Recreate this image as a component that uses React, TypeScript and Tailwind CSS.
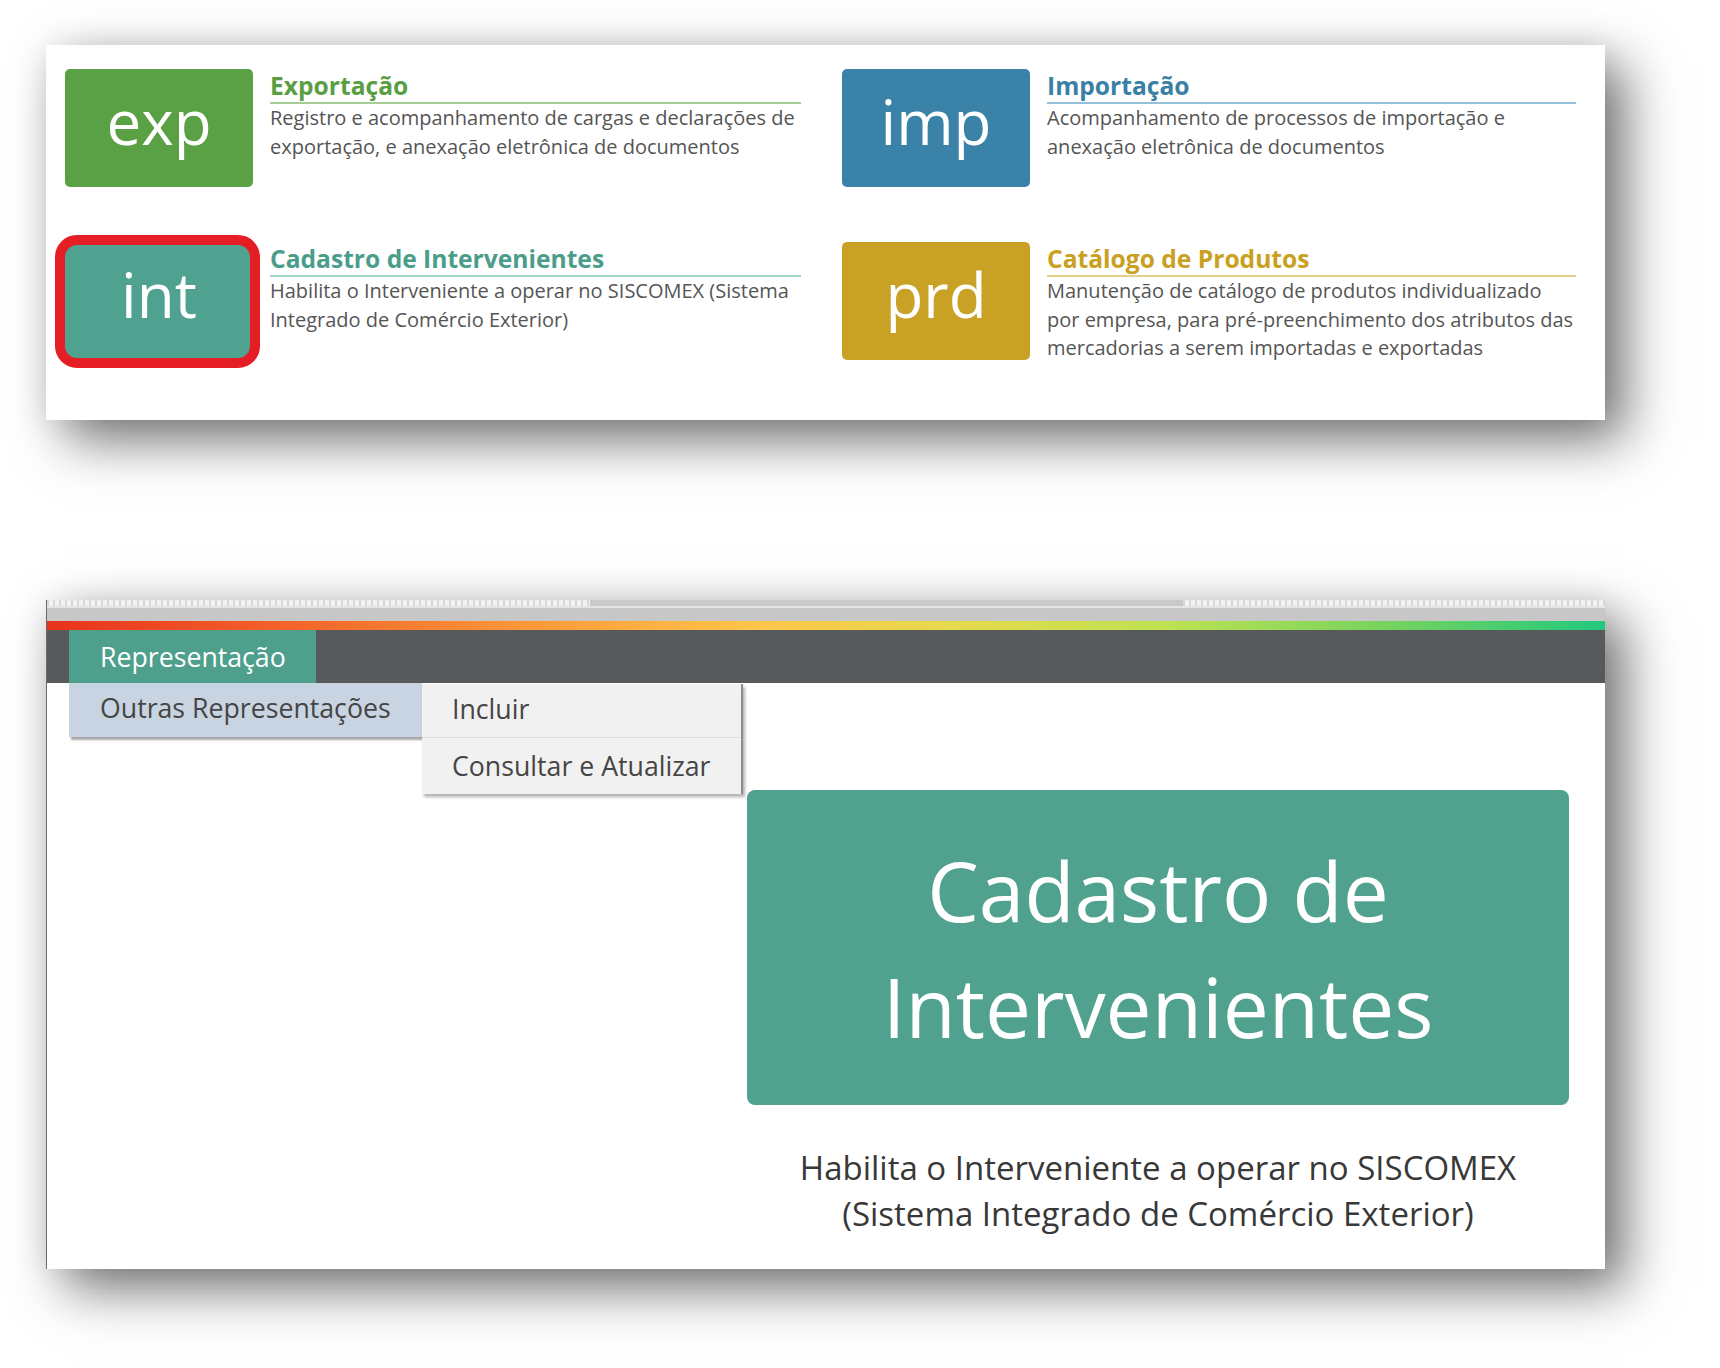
import React from 'react';

type Tile = {
  code: string;
  title: string;
  lines: string[];
  box: string;
  titleColor: string;
  rule: string;
  marked?: boolean;
};

const tiles: Tile[] = [
  {
    code: 'exp',
    title: 'Exportação',
    lines: ['Registro e acompanhamento de cargas e declarações de', 'exportação, e anexação eletrônica de documentos'],
    box: 'bg-[#5aa045]',
    titleColor: 'text-[#5a9e44]',
    rule: 'border-[#a3cf94]',
  },
  {
    code: 'imp',
    title: 'Importação',
    lines: ['Acompanhamento de processos de importação e', 'anexação eletrônica de documentos'],
    box: 'bg-[#3b82a8]',
    titleColor: 'text-[#3a7fa5]',
    rule: 'border-[#95c0da]',
  },
  {
    code: 'int',
    title: 'Cadastro de Intervenientes',
    lines: ['Habilita o Interveniente a operar no SISCOMEX (Sistema', 'Integrado de Comércio Exterior)'],
    box: 'bg-[#4fa290]',
    titleColor: 'text-[#4a9d8a]',
    rule: 'border-[#a2d2c6]',
    marked: true,
  },
  {
    code: 'prd',
    title: 'Catálogo de Produtos',
    lines: [
      'Manutenção de catálogo de produtos individualizado',
      'por empresa, para pré-preenchimento dos atributos das',
      'mercadorias a serem importadas e exportadas',
    ],
    box: 'bg-[#c9a225]',
    titleColor: 'text-[#c9a020]',
    rule: 'border-[#e6d08c]',
  },
];

function SystemTile({ tile }: { tile: Tile }) {
  return (
    <div className="relative flex gap-[17px]">
      <div className={`flex h-[118px] w-[188px] shrink-0 items-center justify-center rounded-[5px] pb-[14px] ${tile.box}`}>
        <span className="text-[62px] leading-none text-white">{tile.code}</span>
      </div>
      {/* red highlight drawn over the selected tile */}
      {tile.marked && (
        <div className="absolute left-[-10px] top-[-7px] h-[133px] w-[205px] rounded-[22px] border-[10px] border-[#e51d24]" />
      )}
      <div className="flex-1">
        <h3 className={`border-b-2 text-[24.6px] font-bold leading-[33px] ${tile.titleColor} ${tile.rule}`}>{tile.title}</h3>
        <p className="text-[20px] leading-[28.5px] text-[#555]">
          {tile.lines.map((line, i) => (
            <span key={i} className="block whitespace-nowrap">{line}</span>
          ))}
        </p>
      </div>
    </div>
  );
}

const dots = 'bg-[repeating-linear-gradient(90deg,#d8d8d8_0px,#d8d8d8_2px,#f1f1f1_2px,#f1f1f1_6px)]';

export default function App() {
  return (
    <div className="flex h-[1368px] w-[1720px] flex-col bg-white pl-[46px] pt-[45px] font-['Open_Sans',sans-serif]">
      {/* Systems panel */}
      <section className="h-[375px] w-[1559px] bg-white pl-[19px] pt-[24px] shadow-[20px_20px_50px_rgba(0,0,0,0.55),0_0_30px_rgba(0,0,0,0.08)]">
        <div className="grid grid-cols-[736px_734px] gap-x-[41px] gap-y-[55px]">
          {tiles.map((t) => (
            <SystemTile key={t.code} tile={t} />
          ))}
        </div>
      </section>

      {/* Intervenientes page */}
      <section className="mt-[180px] flex h-[669px] w-[1559px] flex-col border-l border-[#6b6b6b] bg-white shadow-[20px_20px_50px_rgba(0,0,0,0.55),0_0_30px_rgba(0,0,0,0.08)]">
        <div className="flex h-[6px]">
          <div className={`w-[543px] ${dots}`} />
          <div className="w-[593px] bg-[#c9c9c9]" />
          <div className={`flex-1 ${dots}`} />
        </div>
        <div className="h-[2px] bg-[#e4e4e4]" />
        <div className="h-[13px] bg-[#c8c7c8]" />
        <div className="h-[9px] bg-[linear-gradient(90deg,#e8321d_0%,#f4682b_17%,#fa9c3b_32%,#fcc64b_46%,#e6da4b_58%,#bde252_72%,#76d35e_86%,#22c87f_100%)]" />

        <nav className="flex h-[53px] bg-[#58595b] pl-[22px]">
          <div className="flex w-[247px] items-center bg-[#4ea08d] pl-[31px] text-[26.7px] leading-[53px] text-white">
            Representação
          </div>
        </nav>

        <div className="relative flex flex-1 pt-[107px]">
          {/* open dropdown */}
          <div className="absolute left-[22px] top-0 flex">
            <div className="flex h-[54px] w-[353px] items-center bg-[#c9d4e2] pb-[4px] pl-[31px] text-[26.7px] text-[#454545] shadow-[2px_3px_2px_rgba(0,0,0,0.35)]">
              Outras Representações
            </div>
            <div className="mt-[1px] w-[321px] border-r-2 border-[#8c8c8c] bg-[#f2f1f1] text-[26.7px] text-[#454545] shadow-[2px_3px_3px_rgba(0,0,0,0.3)]">
              <div className="flex h-[54px] items-center border-b border-[#dcdcdc] pb-[2px] pl-[30px]">Incluir</div>
              <div className="flex h-[56px] items-center pl-[30px]">Consultar e Atualizar</div>
            </div>
          </div>

          <div className="w-[700px] shrink-0" />
          <div className="flex w-[822px] flex-col">
            <div className="flex h-[315px] items-center justify-center rounded-[8px] bg-[#50a28f] text-center text-[82px] leading-[116px] text-white">
              <div>
                Cadastro de
                <br />
                Intervenientes
              </div>
            </div>
            <p className="mt-[40px] text-center text-[33px] leading-[46px] text-[#383838]">
              Habilita o Interveniente a operar no SISCOMEX
              <br />
              (Sistema Integrado de Comércio Exterior)
            </p>
          </div>
        </div>
      </section>
    </div>
  );
}
